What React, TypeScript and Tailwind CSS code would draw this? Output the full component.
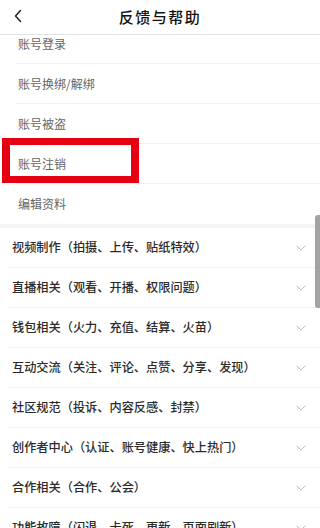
// Help & feedback screen: account sub-list expanded, other categories collapsed.

const ACCOUNT_ITEMS = ["账号登录", "账号换绑/解绑", "账号被盗", "账号注销", "编辑资料"];

const CATEGORIES = [
  "视频制作（拍摄、上传、贴纸特效）",
  "直播相关（观看、开播、权限问题）",
  "钱包相关（火力、充值、结算、火苗）",
  "互动交流（关注、评论、点赞、分享、发现）",
  "社区规范（投诉、内容反感、封禁）",
  "创作者中心（认证、账号健康、快上热门）",
  "合作相关（合作、公会）",
  "功能故障（闪退、卡死、更新、页面刷新）",
];

const FONT = {
  fontFamily: '"Noto Sans CJK SC", "Noto Sans", sans-serif',
};

export default function App() {
  return (
    <div className="relative h-[528px] w-[320px] overflow-hidden bg-white" style={FONT}>
      <Header />
      <div className="h-[493px] overflow-hidden">
        {/* list is scrolled up a little, first row is cut under the header */}
        <div className="-mt-[11px]">
          <ul className="bg-white">
            {ACCOUNT_ITEMS.map((item, i) => (
              <li key={item} className="pl-4">
                <div
                  className={`flex h-[40px] items-center pl-[2px] text-[12px] text-[#666] ${
                    i < ACCOUNT_ITEMS.length - 1 ? "border-b border-[#f0f0f0]" : ""
                  }`}
                >
                  {item}
                </div>
              </li>
            ))}
          </ul>
          <div className="h-[4px] bg-[#f5f5f5]" />
          <ul>
            {CATEGORIES.map((c) => (
              <li key={c} className="pl-2">
                <div className="flex h-[40px] items-center justify-between border-b border-[#f0f0f0] pl-1 pr-[14px]">
                  <span className="text-[12.2px] font-medium text-[#2b2b2b]">{c}</span>
                  <ChevronDown />
                </div>
              </li>
            ))}
          </ul>
        </div>
      </div>

      {/* red highlight frame over 账号注销 */}
      <div className="pointer-events-none absolute left-[2px] top-[138px] h-[45px] w-[137px] border-x-[8px] border-y-[7px] border-[#e50012]" />

      {/* scrollbar thumb */}
      <div className="absolute right-0 top-[215px] h-[93px] w-[5px] rounded-l-[3px] bg-[#a3a3a3]" />
    </div>
  );
}

function Header() {
  return (
    <div className="relative flex h-[35px] items-center justify-center border-b border-[#e2e2e2] bg-white">
      <svg
        className="absolute left-[13px] top-[9px]"
        width="10"
        height="14"
        viewBox="0 0 10 14"
        fill="none"
      >
        <path d="M7.5 1.5 L2.5 7 L7.5 12.5" stroke="#222" strokeWidth="1.5" strokeLinecap="round" strokeLinejoin="round" />
      </svg>
      <span className="text-[15px] font-medium tracking-[1.5px] text-[#111]">反馈与帮助</span>
    </div>
  );
}

function ChevronDown() {
  return (
    <svg width="10" height="6" viewBox="0 0 10 6" fill="none">
      <path d="M1 1 L5 5 L9 1" stroke="#bdbdbd" strokeWidth="1" strokeLinecap="round" strokeLinejoin="round" />
    </svg>
  );
}
